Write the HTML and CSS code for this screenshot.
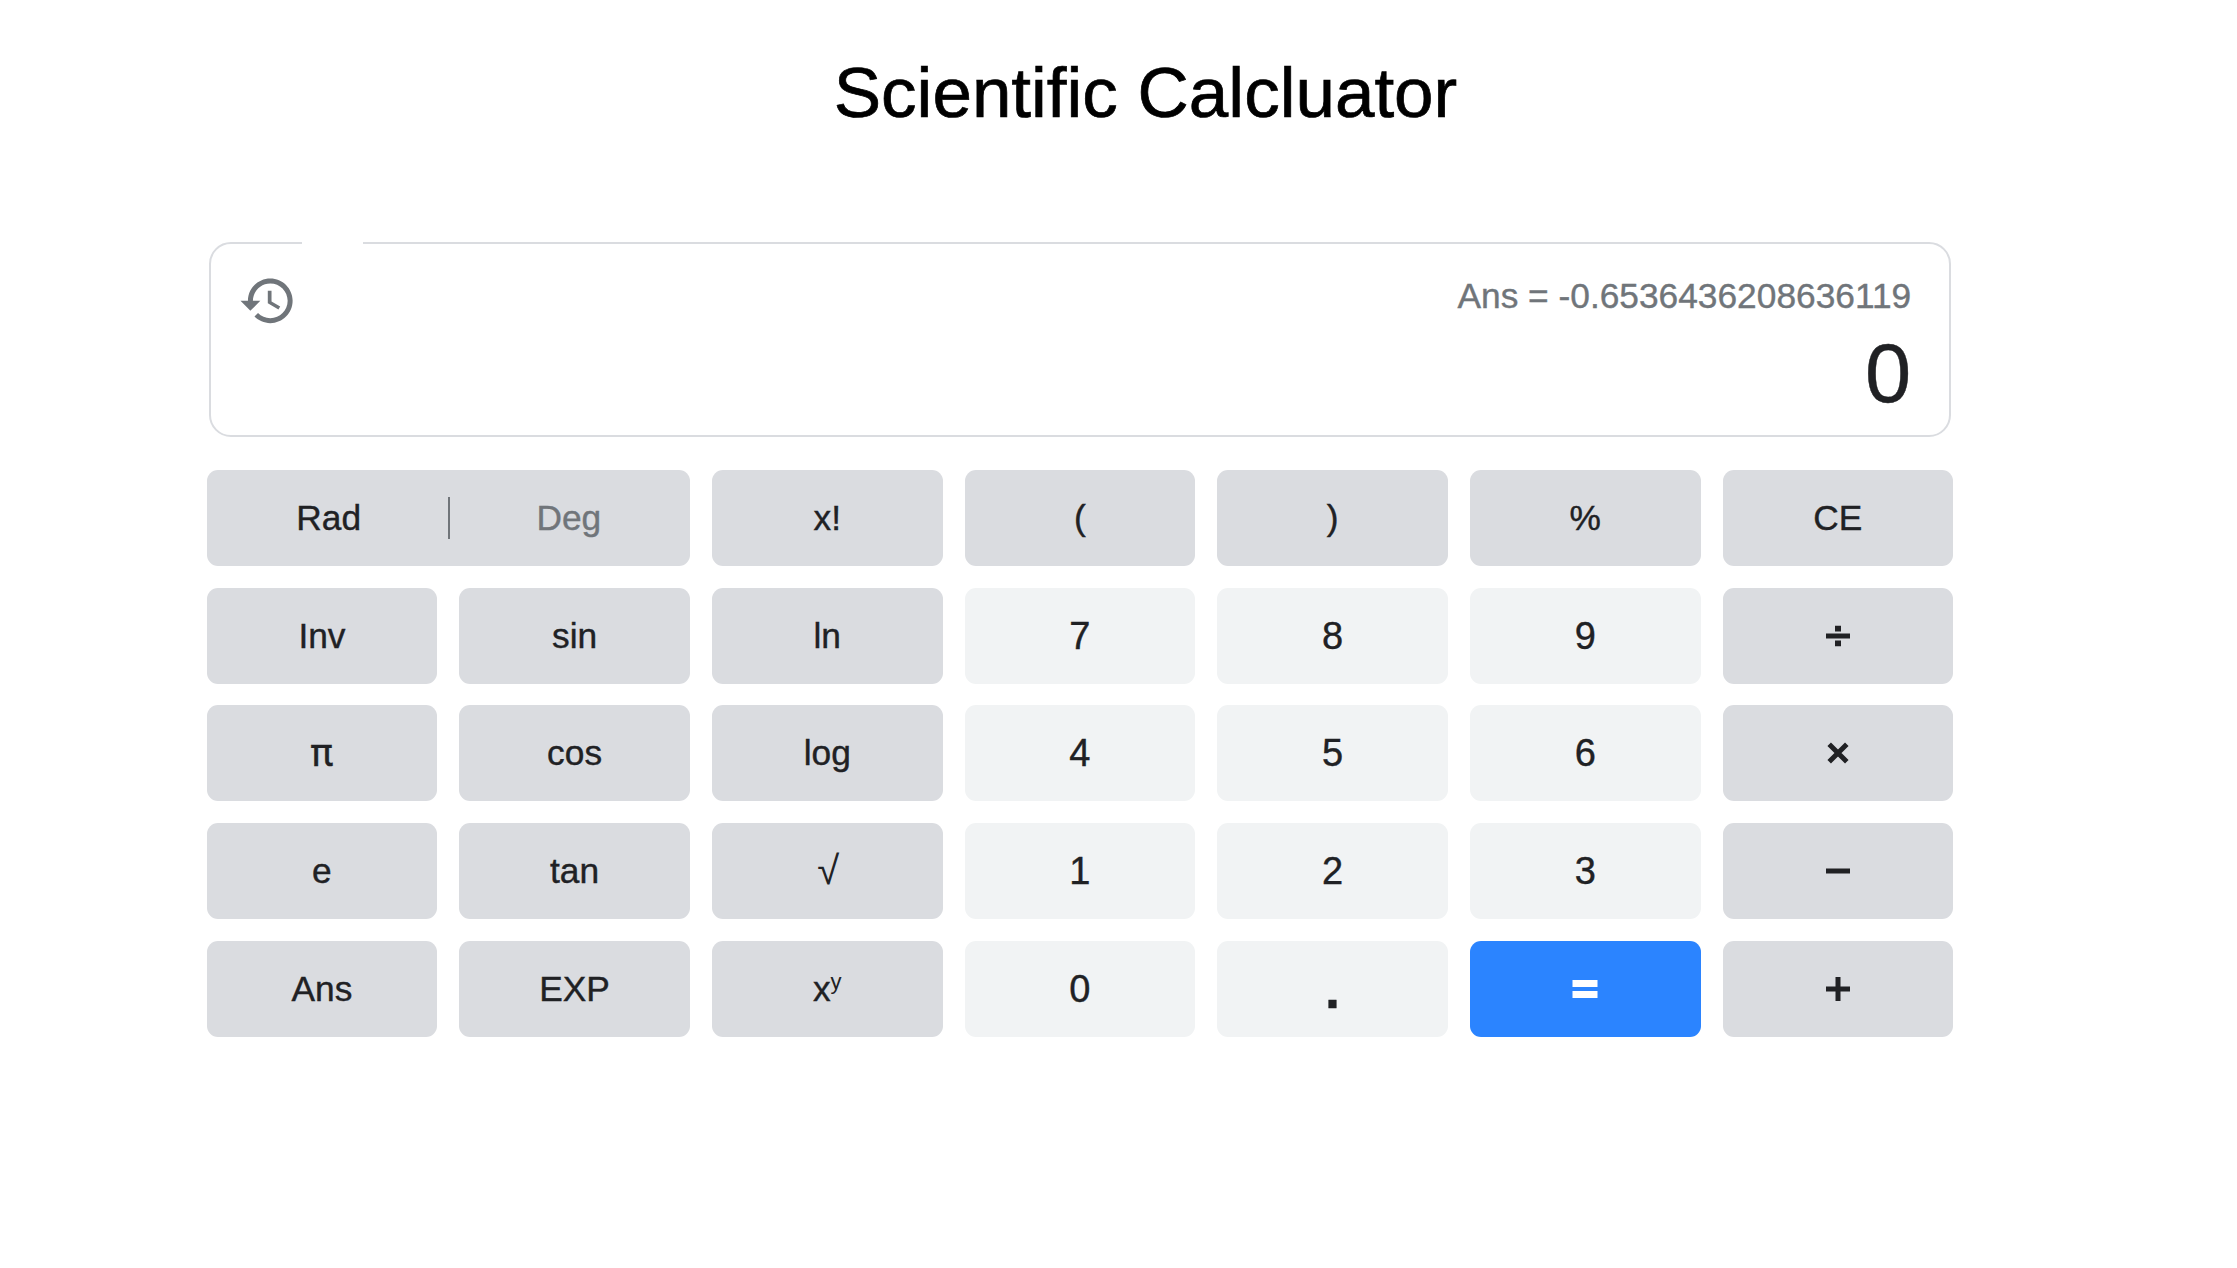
FILE: index.html
```html
<!DOCTYPE html>
<html lang="en">
<head>
<meta charset="utf-8">
<title>Scientific Calcluator</title>
<link rel="stylesheet" href="styles.css">
</head>
<body>
<h1 class="title">Scientific Calcluator</h1>
<main class="calculator">
  <section class="display">
    <span class="border-gap"></span>
    <svg class="history" viewBox="0 0 24 24" aria-label="History"><path d="M13 3c-4.97 0-9 4.03-9 9H1l3.89 3.89.07.14L9 12H6c0-3.87 3.13-7 7-7s7 3.13 7 7-3.13 7-7 7c-1.93 0-3.68-.79-4.94-2.06l-1.42 1.42C8.27 19.99 10.51 21 13 21c4.97 0 9-4.03 9-9s-4.03-9-9-9zm-1 5v5l4.28 2.54.72-1.21-3.5-2.08V8H12z"/></svg>
    <div class="readout">
      <div class="previous">Ans = -0.6536436208636119</div>
      <div class="current">0</div>
    </div>
  </section>
  <section class="keys">
    <div class="key angle"><button class="mode">Rad</button><span class="divider"></span><button class="mode off">Deg</button></div>
    <button class="key">x!</button>
    <button class="key">(</button>
    <button class="key">)</button>
    <button class="key">%</button>
    <button class="key">CE</button>

    <button class="key">Inv</button>
    <button class="key">sin</button>
    <button class="key">ln</button>
    <button class="key num">7</button>
    <button class="key num">8</button>
    <button class="key num">9</button>
    <button class="key" aria-label="divide"><svg class="op" viewBox="0 0 24 24"><path d="M0 9.5h24v5H0zM9 1.8h6v5.7H9zM9 16.5h6v5.7H9z"/></svg></button>

    <button class="key pi">π</button>
    <button class="key">cos</button>
    <button class="key">log</button>
    <button class="key num">4</button>
    <button class="key num">5</button>
    <button class="key num">6</button>
    <button class="key" aria-label="multiply"><svg class="op" viewBox="0 0 24 24"><path class="stroke" d="M3.2 3.2l17.6 17.6M20.8 3.2L3.2 20.8"/></svg></button>

    <button class="key">e</button>
    <button class="key">tan</button>
    <button class="key root">√</button>
    <button class="key num">1</button>
    <button class="key num">2</button>
    <button class="key num">3</button>
    <button class="key" aria-label="minus"><svg class="op" viewBox="0 0 24 24"><path d="M0 9.5h24v5H0z"/></svg></button>

    <button class="key">Ans</button>
    <button class="key">EXP</button>
    <button class="key"><span>x<sup class="power">y</sup></span></button>
    <button class="key num">0</button>
    <button class="key num point">.</button>
    <button class="key equals" aria-label="equals"><svg class="op wide" viewBox="0 0 26 24"><path d="M.5 3h25v7H.5zM.5 14h25v7H.5z"/></svg></button>
    <button class="key" aria-label="plus"><svg class="op" viewBox="0 0 24 24"><path d="M0 9.5h24v5H0zM9.5 0h5v24h-5z"/></svg></button>
  </section>
</main>
</body>
</html>
```
FILE: styles.css
```css
* {
  box-sizing: border-box;
}

body {
  margin: 0;
  background: #fff;
  color: #202124;
  font-family: "Liberation Sans", Arial, sans-serif;
  -webkit-text-stroke: 0.4px currentColor;
}

.title {
  margin: 0;
  padding: 52px 0 0 54px;
  height: 242px;
  font-size: 71px;
  font-weight: 400;
  line-height: 81px;
  text-align: center;
  color: #000;
  -webkit-text-stroke: 0.7px #000;
}

.calculator {
  width: 1746.6px;
  margin-left: 206.6px;
}

.display {
  position: relative;
  display: flex;
  justify-content: space-between;
  height: 195px;
  margin: 0 2px 33px;
  padding: 27px 38px 0 27px;
  border: 2px solid #dadce0;
  border-radius: 22px;
}

.border-gap {
  position: absolute;
  top: -3px;
  left: 91px;
  width: 61px;
  height: 4px;
  background: #fff;
}

.history {
  width: 59.6px;
  height: 59.6px;
  fill: #70757a;
}

.readout {
  text-align: right;
}

.previous {
  font-size: 35.3px;
  line-height: 50px;
  color: #70757a;
}

.current {
  font-size: 83px;
  line-height: 106px;
}

.keys {
  display: grid;
  grid-template-columns: repeat(7, 1fr);
  grid-auto-rows: 96px;
  gap: 21.7px 22px;
}

.key {
  display: flex;
  align-items: center;
  justify-content: center;
  padding: 0;
  border: 0;
  border-radius: 11px;
  background: #dadce0;
  color: inherit;
  font: 35.3px "Liberation Sans", Arial, sans-serif;
  -webkit-text-stroke: inherit;
}

.num {
  padding-top: 1px;
  background: #f1f3f4;
  font-size: 38px;
}

.angle {
  grid-column: span 2;
}

.mode {
  flex: 1;
  padding: 0 0 0 3px;
  border: 0;
  background: none;
  color: inherit;
  font: inherit;
  -webkit-text-stroke: inherit;
}

.off {
  padding: 0 2px 0 0;
  color: #70757a;
}

.divider {
  width: 2px;
  height: 42px;
  background: #70757a;
}

.pi {
  font-family: Roboto, "Liberation Sans", sans-serif;
  font-size: 38px;
}

.root {
  padding: 0 0 2px 2px;
  font-size: 40px;
  -webkit-text-stroke: 0;
}

.point {
  font-size: 54px;
  font-weight: 700;
  line-height: 60px;
}

.power {
  font-size: 22px;
  line-height: 0;
  vertical-align: 12px;
  -webkit-text-stroke: 0;
}

.op {
  width: 24px;
  height: 24px;
  fill: currentColor;
}

.wide {
  width: 26px;
}

.stroke {
  stroke: currentColor;
  stroke-width: 5;
}

.equals {
  background: #2b84ff;
  color: #fff;
}
```
